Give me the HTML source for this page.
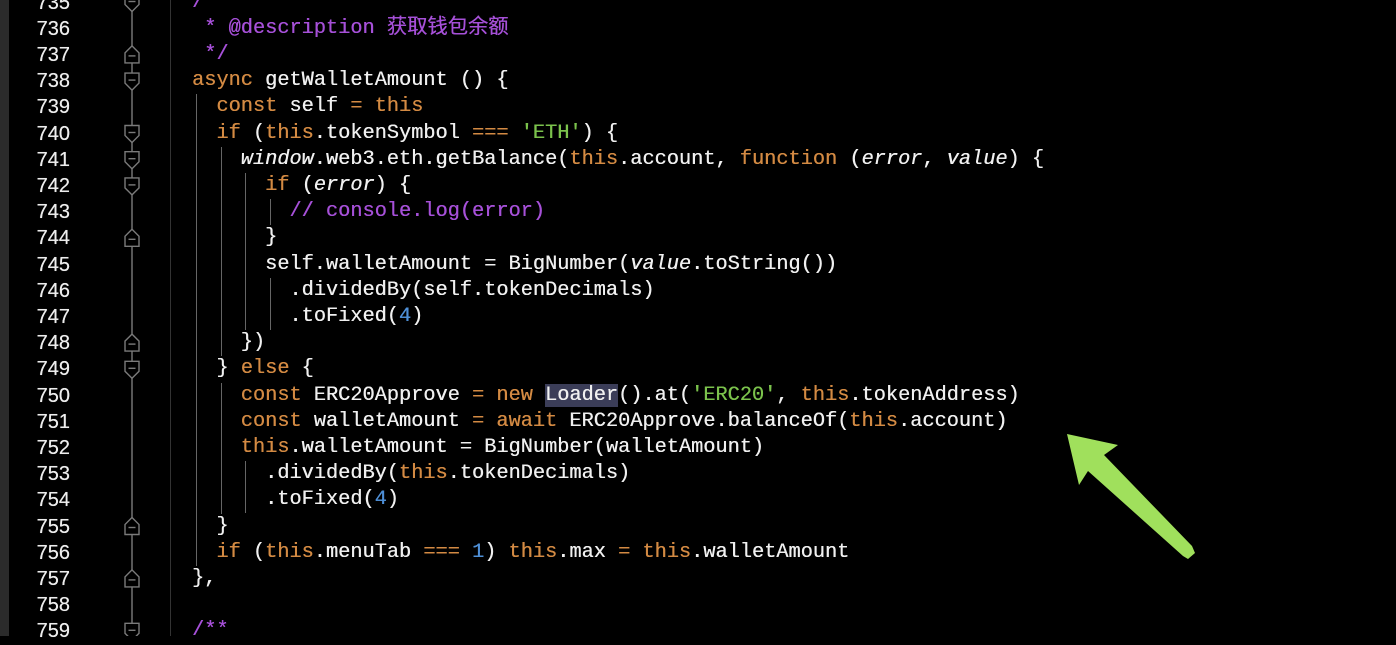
<!DOCTYPE html>
<html><head><meta charset="utf-8"><style>
body{margin:0;width:1396px;height:636px;background:#000;overflow:hidden;position:relative;font-family:"Liberation Mono","Noto Sans CJK SC",monospace;}
.strip{position:absolute;left:0;top:0;width:9px;height:636px;background:#2b2b2b}
.ln{position:absolute;left:28px;width:42px;text-align:right;color:#ededed;font-size:20px;line-height:26.2px;font-family:"Liberation Sans",sans-serif;text-shadow:0 0 0.4px #fff}
.c{position:absolute;left:192px;white-space:pre;color:#f0f0f0;font-size:20.3px;line-height:26.2px;text-shadow:0.3px 0 0 currentColor}
.k{color:#d38a43}.m{color:#a650d8}.s{color:#7bc24c}.n{color:#4e8fd6}.i{font-style:italic}
.g{position:absolute;width:1px;background:#666}
.sep{position:absolute;left:170px;top:0;width:1px;height:636px;background:#333}
</style></head><body>
<div class="strip"></div><div class="sep"></div>
<svg style="position:absolute;left:0;top:0" width="170" height="636">
<g stroke="#7a7a7a" stroke-width="1.4" fill="#000">
<line x1="132" y1="0" x2="132" y2="636"/>
</g>
<g id="f" stroke="#7a7a7a" stroke-width="1.4" fill="#000"></g>
</svg>
<div id="lines"></div>
<svg style="position:absolute;left:0;top:0" width="1396" height="636">
<polygon fill="#a0e05c" points="1067,434 1118,445 1104,455 1192,546 1195,553 1188,559 1183,556 1088,471 1079,485"/>
</svg>
<script>
var L=[
['735','<span class="m">/**</span>',0,'d'],
['736','<span class="m"> * @description 获取钱包余额</span>',0,''],
['737','<span class="m"> */</span>',0,'u'],
['738','<span class="k">async</span> getWalletAmount () {',0,'d'],
['739','  <span class="k">const</span> self <span class="k">=</span> <span class="k">this</span>',0,''],
['740','  <span class="k">if</span> (<span class="k">this</span>.tokenSymbol <span class="k">===</span> <span class="s">\'ETH\'</span>) {',0,'d'],
['741','    <span class="i">window</span>.web3.eth.getBalance(<span class="k">this</span>.account, <span class="k">function</span> (<span class="i">error</span>, <span class="i">value</span>) {',0,'d'],
['742','      <span class="k">if</span> (<span class="i">error</span>) {',0,'d'],
['743','        <span class="m">// console.log(error)</span>',0,''],
['744','      }',0,'u'],
['745','      self.walletAmount = BigNumber(<span class="i">value</span>.toString())',0,''],
['746','        .dividedBy(self.tokenDecimals)',0,''],
['747','        .toFixed(<span class="n">4</span>)',0,''],
['748','    })',0,'u'],
['749','  } <span class="k">else</span> {',0,'b'],
['750','    <span class="k">const</span> ERC20Approve <span class="k">=</span> <span class="k">new</span> <span style="background:#3b3d58">Loader</span>().at(<span class="s">\'ERC20\'</span>, <span class="k">this</span>.tokenAddress)',0,''],
['751','    <span class="k">const</span> walletAmount <span class="k">=</span> <span class="k">await</span> ERC20Approve.balanceOf(<span class="k">this</span>.account)',0,''],
['752','    <span class="k">this</span>.walletAmount = BigNumber(walletAmount)',0,''],
['753','      .dividedBy(<span class="k">this</span>.tokenDecimals)',0,''],
['754','      .toFixed(<span class="n">4</span>)',0,''],
['755','  }',0,'u'],
['756','  <span class="k">if</span> (<span class="k">this</span>.menuTab <span class="k">===</span> <span class="n">1</span>) <span class="k">this</span>.max <span class="k">=</span> <span class="k">this</span>.walletAmount',0,''],
['757','},',0,'u'],
['758','',0,''],
['759','<span class="m">/**</span>',0,'d']];
var h='',f='';
L.forEach(function(l,i){var t=-10.5+i*26.2;
h+='<div class="ln" style="top:'+t+'px">'+l[0]+'</div><div class="c" style="top:'+t+'px">'+l[1]+'</div>';
var y=t+13;
if(l[3]=='d'||l[3]=='b')f+='<path d="M125 '+(y-8)+'h14v10l-7 7l-7-7z"/><line x1="128.5" y1="'+(y-1)+'" x2="135.5" y2="'+(y-1)+'"/>';
if(l[3]=='u')f+='<path d="M125 '+(y+8)+'h14v-10l-7-7l-7 7z"/><line x1="128.5" y1="'+(y+1)+'" x2="135.5" y2="'+(y+1)+'"/>';
});
document.getElementById('lines').innerHTML=h;
document.getElementById('f').innerHTML=f;
function g(x,a,b){var d=document.createElement('div');d.className='g';d.style.left=x+'px';d.style.top=(-10.5+(a-735)*26.2)+'px';d.style.height=((b-a+1)*26.2)+'px';document.body.appendChild(d);}
g(196,739,756);g(221,741,748);g(221,750,754);g(245,742,747);g(270,743,743);g(270,746,747);g(245,753,754);
</script>
</body></html>
